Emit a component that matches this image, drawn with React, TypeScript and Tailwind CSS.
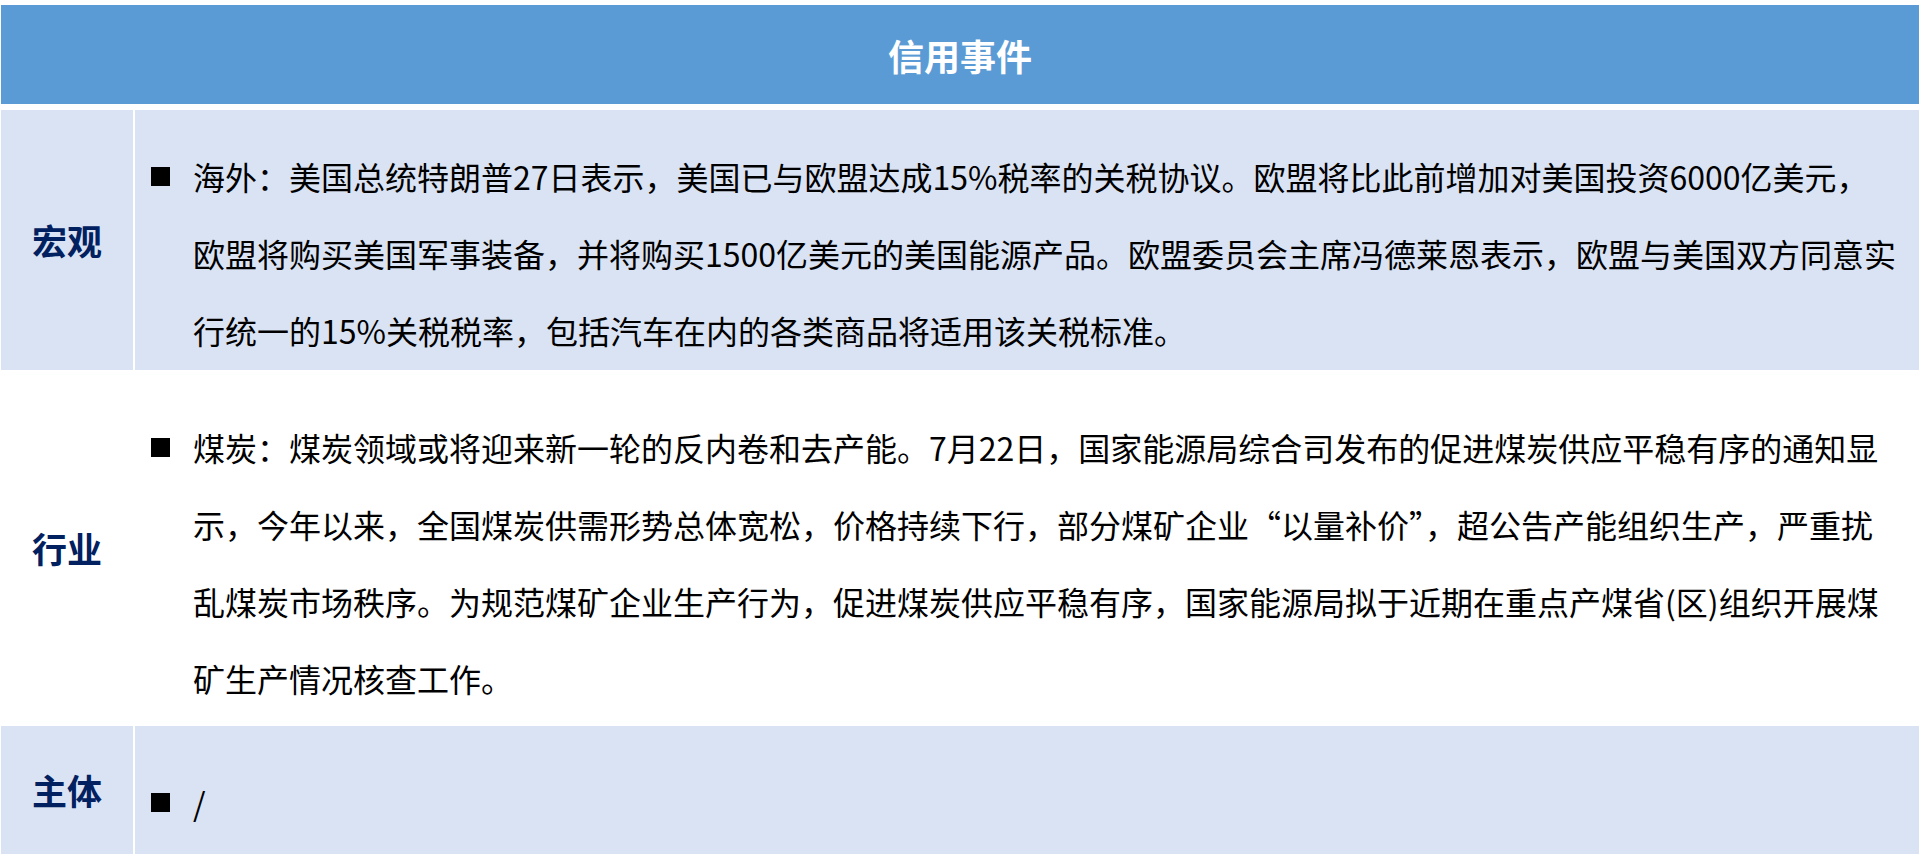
const rows = [
  {
    label: "宏观",
    shaded: true,
    height: "h-[260px]",
    top: "pt-[28px]",
    lines: [
      "海外：美国总统特朗普27日表示，美国已与欧盟达成15%税率的关税协议。欧盟将比此前增加对美国投资6000亿美元，",
      "欧盟将购买美国军事装备，并将购买1500亿美元的美国能源产品。欧盟委员会主席冯德莱恩表示，欧盟与美国双方同意实",
      "行统一的15%关税税率，包括汽车在内的各类商品将适用该关税标准。",
    ],
  },
  {
    label: "行业",
    shaded: false,
    height: "h-[356px]",
    top: "pt-[39px]",
    lines: [
      "煤炭：煤炭领域或将迎来新一轮的反内卷和去产能。7月22日，国家能源局综合司发布的促进煤炭供应平稳有序的通知显",
      "示，今年以来，全国煤炭供需形势总体宽松，价格持续下行，部分煤矿企业“以量补价”，超公告产能组织生产，严重扰",
      "乱煤炭市场秩序。为规范煤矿企业生产行为，促进煤炭供应平稳有序，国家能源局拟于近期在重点产煤省(区)组织开展煤",
      "矿生产情况核查工作。",
    ],
  },
  {
    label: "主体",
    shaded: true,
    height: "h-[128px]",
    top: "pt-[38px]",
    lines: ["/"],
  },
];

function Row({ row }: { row: (typeof rows)[number] }) {
  return (
    <div className={`flex ${row.height} ${row.shaded ? "bg-[#dae3f3]" : "bg-white"}`}>
      <div className="flex w-[132px] shrink-0 items-center justify-center text-[35px] font-bold text-[#002060]">
        {row.label}
      </div>
      <div className="w-[2px] shrink-0 bg-white" />
      <div className={`flex flex-1 pl-[16px] ${row.top}`}>
        <div className="flex h-[77px] w-[19px] shrink-0 items-center">
          <span className="block h-[19px] w-[19px] bg-black" />
        </div>
        <div className="ml-[23px] text-[32px] leading-[77px] text-black">
          {row.lines.map((line) => (
            <div key={line} className="whitespace-nowrap">
              {line}
            </div>
          ))}
        </div>
      </div>
    </div>
  );
}

export default function App() {
  return (
    <main className="min-h-screen bg-white pt-[5px] pl-[1px] font-['Noto_Sans_CJK_SC',sans-serif]">
      <div className="w-[1918px]">
        <div className="flex h-[99px] items-center justify-center bg-[#5b9bd5] text-[36px] font-bold text-white">
          信用事件
        </div>
        <div className="mt-[6px]">
          {rows.map((row) => (
            <Row key={row.label} row={row} />
          ))}
        </div>
      </div>
    </main>
  );
}
